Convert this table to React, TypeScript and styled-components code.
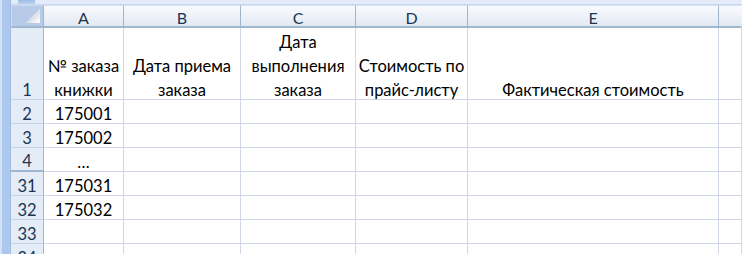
import React from 'react';
import styled, { createGlobalStyle } from 'styled-components';

const GlobalStyle = createGlobalStyle`
    html, body {
        margin:0;
        padding:0;
        background:#ffffff;
        overflow:hidden;
    }
    body {
        font-family:Lato, "Noto Sans", sans-serif;
    }
`;

const columns = ['A', 'B', 'C', 'D', 'E', ''];

const headings: (string[] | null)[] = [
    ['№ заказа', 'книжки'],
    ['Дата приема', 'заказа'],
    ['Дата', 'выполнения', 'заказа'],
    ['Стоимость по', 'прайс-листу'],
    ['Фактическая стоимость'],
    null,
];

const rows = [
    { label: '2', order: '175001' },
    { label: '3', order: '175002' },
    { label: '4', order: '…', hiddenAfter: true },
    { label: '31', order: '175031' },
    { label: '32', order: '175032' },
    { label: '33', order: '' },
    { label: '34', order: '' },
];

const App = () => {
    return (
        <Window>
            <GlobalStyle />
            <SideBar />
            <Main>
                <TopStrip>
                    <SplitBox />
                </TopStrip>
                <Sheet>
                    <Corner>
                        <CornerTriangle />
                    </Corner>
                    {columns.map((col, i) => (
                        <ColumnHeader key={i} $last={i === columns.length - 1}>{col}</ColumnHeader>
                    ))}

                    <RowHeader>1</RowHeader>
                    {headings.map((lines, i) => (
                        <Cell key={i} $align="center">
                            {lines && lines.map(line => <Line key={line}>{line}</Line>)}
                        </Cell>
                    ))}

                    {rows.map(row => (
                        <React.Fragment key={row.label}>
                            <RowHeader $hiddenAfter={row.hiddenAfter}>{row.label}</RowHeader>
                            <Cell $align="center">{row.order}</Cell>
                            <Cell />
                            <Cell />
                            <Cell />
                            <Cell />
                            <Cell />
                        </React.Fragment>
                    ))}
                </Sheet>
            </Main>
        </Window>
    );
};

export default App;

const Window = styled.div`
    display:flex;
    width:742px;
    height:254px;
    overflow:hidden;
    background:#ffffff;
`;

const SideBar = styled.div`
    flex:0 0 11px;
    box-sizing:border-box;
    border-left:2px solid #d3e1f4;
    border-right:1px solid #a4bcdc;
    background:#adc8ee;
`;

const Main = styled.div`
    flex:1;
    display:flex;
    flex-direction:column;
    min-width:0;
`;

const TopStrip = styled.div`
    flex:0 0 5px;
    display:flex;
    background:#e3ecf8;
    border-bottom:1px solid #c6d8ef;
    box-sizing:border-box;
`;

const SplitBox = styled.div`
    margin-left:7px;
    width:17px;
    height:4px;
    background:linear-gradient(#9dbbe6, #bcd2f0);
`;

const Sheet = styled.div`
    display:grid;
    grid-template-columns:33px 80px 117px 115px 112px 251px 1fr;
    grid-template-rows:23px 72px repeat(7, 24px);
    font-size:16.5px;
    color:#000000;
`;

const Corner = styled.div`
    position:relative;
    box-sizing:border-box;
    background:#b7cbe8;
    border:1px solid #cfdcee;
    border-right:1px solid #9eb6ce;
    border-bottom:2px solid #9eb6ce;
`;

const CornerTriangle = styled.div`
    position:absolute;
    right:3px;
    bottom:3px;
    width:14px;
    height:14px;
    background:linear-gradient(135deg, transparent 50%, #d9dee6 50%, #ffffff 100%);
`;

const ColumnHeader = styled.div<{ $last?: boolean }>`
    box-sizing:border-box;
    display:flex;
    align-items:center;
    justify-content:center;
    padding-top:2px;
    background:linear-gradient(#f9fafd, #e3e9f2);
    border-right:1px solid ${p => (p.$last ? 'transparent' : '#9eb6ce')};
    border-bottom:2px solid #9eb6ce;
    border-top:1px solid #d5e3f4;
    color:#1b3555;
    font-size:16px;
`;

const RowHeader = styled.div<{ $hiddenAfter?: boolean }>`
    box-sizing:border-box;
    display:flex;
    align-items:flex-end;
    justify-content:center;
    background:#e4ecf7;
    border-right:1px solid #9eb6ce;
    border-bottom:${p => (p.$hiddenAfter ? '2px solid #9eb6ce' : '1px solid #c5d3e5')};
    color:#1b3555;
    line-height:18px;
`;

const Cell = styled.div<{ $align?: 'left' | 'center' }>`
    box-sizing:border-box;
    display:flex;
    flex-direction:column;
    justify-content:flex-end;
    align-items:${p => (p.$align === 'center' ? 'center' : 'flex-start')};
    border-right:1px solid #d0d7e5;
    border-bottom:1px solid #d0d7e5;
    line-height:18px;
    white-space:nowrap;
`;

const Line = styled.span`
    display:block;
    line-height:24px;
    &:last-child {
        margin-bottom:-3px;
    }
`;
